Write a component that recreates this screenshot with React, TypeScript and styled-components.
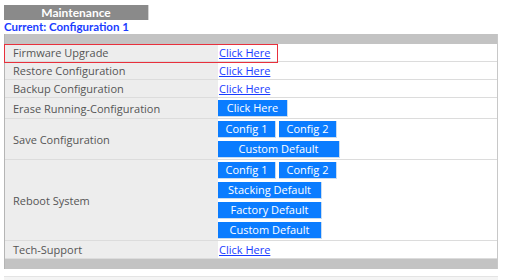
import React from "react";
import styled, { createGlobalStyle } from "styled-components";

const Global = createGlobalStyle`
  html, body { margin: 0; padding: 0; background: #ffffff; }
  body { font-family: "Open Sans", "Liberation Sans", sans-serif; }
`;

const Page = styled.div`
  padding: 5px 13px 0 4px;
  display: flex;
  flex-direction: column;
`;

const TitleBar = styled.div`
  width: 144px;
  height: 15px;
  background: #8a8a8a;
  border-right: 1px solid #d4d4d4;
  color: #ffffff;
  font-family: Lato, "Open Sans", sans-serif;
  font-weight: 700;
  font-size: 12px;
  line-height: 15px;
  text-align: center;
`;

const Current = styled.div`
  color: #1a3cff;
  font-family: Lato, "Open Sans", sans-serif;
  font-weight: 700;
  font-size: 11.5px;
  line-height: 14px;
`;

const Table = styled.div`
  position: relative;
  display: flex;
  flex-direction: column;
  border-left: 1px solid #b5b5b5;
  border-right: 1px solid #c8c8c8;
`;

const Bar = styled.div`
  height: 10px;
  background: #c3c3c3;
`;

const Row = styled.div`
  display: grid;
  grid-template-columns: 213px 1fr;
  border-bottom: 1px solid #dcdcdc;
`;

const Label = styled.div`
  background: #ededed;
  color: #555555;
  font-size: 11px;
  display: flex;
  align-items: center;
  padding-left: 8px;
  min-height: 17px;
`;

const Value = styled.div<{ $pad?: boolean }>`
  background: #ffffff;
  display: flex;
  flex-direction: column;
  gap: 3px;
  padding: ${(p) => (p.$pad ? "2px 0 1px 0" : "0")};
  justify-content: center;
`;

const Line = styled.div`
  display: flex;
  gap: 3px;
`;

const Link = styled.a`
  color: #1a3cff;
  font-size: 11px;
  line-height: 17px;
  text-decoration: underline;
  padding-left: 1px;
  cursor: pointer;
`;

const Button = styled.button<{ $w: number }>`
  width: ${(p) => p.$w}px;
  height: 17px;
  padding: 0;
  margin: 0;
  border: none;
  border-right: 1px solid #c8dcf0;
  border-bottom: 1px solid #c8dcf0;
  background: #0a7cff;
  color: #ffffff;
  font-family: "Open Sans", "Liberation Sans", sans-serif;
  font-size: 11px;
  line-height: 16px;
  text-align: center;
  cursor: pointer;
`;

const Highlight = styled.div`
  position: absolute;
  left: -1px;
  top: 10px;
  width: 274px;
  height: 19px;
  border: 1px solid #e8303c;
  box-sizing: border-box;
  pointer-events: none;
`;

const Rule = styled.div`
  margin-top: 7px;
  height: 3px;
  border-top: 1px solid #e4e4e4;
  background: #f4f4f4;
`;

export default function App() {
  return (
    <>
      <Global />
      <Page>
        <TitleBar>Maintenance</TitleBar>
        <Current>Current: Configuration 1</Current>
        <Table>
          <Bar />
          <Row>
            <Label>Firmware Upgrade</Label>
            <Value><Link>Click Here</Link></Value>
          </Row>
          <Row>
            <Label>Restore Configuration</Label>
            <Value><Link>Click Here</Link></Value>
          </Row>
          <Row>
            <Label>Backup Configuration</Label>
            <Value><Link>Click Here</Link></Value>
          </Row>
          <Row>
            <Label>Erase Running-Configuration</Label>
            <Value $pad><Button $w={70}>Click Here</Button></Value>
          </Row>
          <Row>
            <Label>Save Configuration</Label>
            <Value $pad>
              <Line>
                <Button $w={58}>Config 1</Button>
                <Button $w={58}>Config 2</Button>
              </Line>
              <Button $w={122}>Custom Default</Button>
            </Value>
          </Row>
          <Row>
            <Label>Reboot System</Label>
            <Value $pad>
              <Line>
                <Button $w={58}>Config 1</Button>
                <Button $w={58}>Config 2</Button>
              </Line>
              <Button $w={104}>Stacking Default</Button>
              <Button $w={104}>Factory Default</Button>
              <Button $w={104}>Custom Default</Button>
            </Value>
          </Row>
          <Row>
            <Label>Tech-Support</Label>
            <Value><Link>Click Here</Link></Value>
          </Row>
          <Bar />
          <Highlight />
        </Table>
        <Rule />
      </Page>
    </>
  );
}
